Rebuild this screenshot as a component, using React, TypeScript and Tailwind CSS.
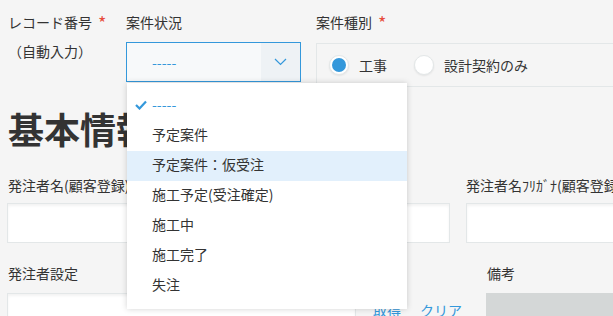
import React from 'react';

const statusOptions = [
  '-----',
  '予定案件',
  '予定案件：仮受注',
  '施工予定(受注確定)',
  '施工中',
  '施工完了',
  '失注',
];

function Required() {
  return <span className="ml-[6px] text-[18px] leading-[14px] text-[#e74c3c]">*</span>;
}

function Radio({ checked, label }: { checked?: boolean; label: string }) {
  return (
    <div className="flex items-center">
      <span className="w-[20px] h-[20px] rounded-full bg-white border border-[#e3e7e8] shadow-[0_1px_2px_rgba(0,0,0,0.08)] flex items-center justify-center">
        {checked && <span className="w-[14px] h-[14px] rounded-full bg-[#3498db]" />}
      </span>
      <span className="ml-[10px]">{label}</span>
    </div>
  );
}

function TextBox({ className }: { className: string }) {
  return (
    <div
      className={
        'bg-white border border-[#e3e7e8] shadow-[inset_0_2px_3px_rgba(0,0,0,0.05)] ' + className
      }
    />
  );
}

export default function App() {
  return (
    <div className="relative w-[613px] h-[316px] overflow-hidden bg-[#f5f5f5] text-[14px] text-[#333] font-['Noto_Sans_CJK_JP','Noto_Sans',sans-serif]">
      {/* top row */}
      <div className="flex pt-[12px]">
        <div className="w-[126px] pl-[8px] shrink-0">
          <div className="h-[20px] leading-[20px] flex items-center whitespace-nowrap">
            レコード番号
            <Required />
          </div>
          <div className="mt-[9px] leading-[20px]">（自動入力）</div>
        </div>

        <div className="w-[190px] shrink-0">
          <div className="h-[20px] leading-[20px]">案件状況</div>
          <div className="mt-[10px] w-[175px] h-[40px] border border-[#3498db] flex">
            <div className="flex-1 bg-[#f7f9fa] pl-[25px] flex items-center text-[#3498db]">-----</div>
            <div className="w-[39px] bg-[#eef2f5] flex items-center justify-center">
              <svg width="13" height="8" viewBox="0 0 13 8" fill="none">
                <path d="M1 1l5.5 5.5L12 1" stroke="#3498db" strokeWidth="1.2" />
              </svg>
            </div>
          </div>
        </div>

        <div className="w-[320px] shrink-0">
          <div className="h-[20px] leading-[20px] flex items-center">
            案件種別
            <Required />
          </div>
          <div className="mt-[11px] h-[44px] border border-[#e3e7e8] flex items-center pl-[12px] gap-[27px]">
            <Radio checked label="工事" />
            <Radio label="設計契約のみ" />
          </div>
        </div>
      </div>

      {/* section heading */}
      <div className="mt-[23px] pl-[8px] text-[36px] leading-[36px] font-bold text-[#333]">基本情報</div>

      {/* customer name row */}
      <div className="flex mt-[29px]">
        <div className="w-[466px] pl-[7px] shrink-0">
          <div className="pl-[1px] h-[20px] leading-[20px] whitespace-nowrap">発注者名(顧客登録)</div>
          <TextBox className="mt-[8px] w-[443px] h-[40px]" />
        </div>
        <div className="w-[300px] shrink-0">
          <div className="h-[20px] leading-[20px] whitespace-nowrap">発注者名ﾌﾘｶﾞﾅ(顧客登録)</div>
          <TextBox className="mt-[8px] w-[300px] h-[40px]" />
        </div>
      </div>

      {/* customer setting row */}
      <div className="flex mt-[20px]">
        <div className="w-[373px] pl-[7px] shrink-0">
          <div className="pl-[1px] h-[20px] leading-[20px]">発注者設定</div>
          <TextBox className="mt-[10px] w-[349px] h-[40px]" />
        </div>
        <div className="w-[113px] pt-[37px] flex gap-[19px] text-[#3498db] leading-[20px] shrink-0">
          <span>取得</span>
          <span>クリア</span>
        </div>
        <div className="w-[200px] shrink-0">
          <div className="pl-[1px] h-[20px] leading-[20px]">備考</div>
          <div className="mt-[10px] h-[40px] bg-[#d4d7d7]" />
        </div>
      </div>

      {/* open dropdown */}
      <div className="absolute left-[127px] top-[83px] w-[280px] py-[8px] bg-white shadow-[0_0_6px_rgba(0,0,0,0.18)]">
        {statusOptions.map((opt, i) => (
          <div
            key={i}
            className={
              'relative h-[30px] pl-[25px] pb-[3px] flex items-center ' +
              (i === 2 ? 'bg-[#e2f0fc] ' : '') +
              (i === 0 ? 'text-[#3498db]' : 'text-[#333]')
            }
          >
            {i === 0 && (
              <svg className="absolute left-[8px] top-[9px]" width="12" height="10" viewBox="0 0 12 10" fill="none">
                <path d="M1 5l3.5 3.5L11 1.5" stroke="#3498db" strokeWidth="2.2" />
              </svg>
            )}
            {opt}
          </div>
        ))}
      </div>
    </div>
  );
}
